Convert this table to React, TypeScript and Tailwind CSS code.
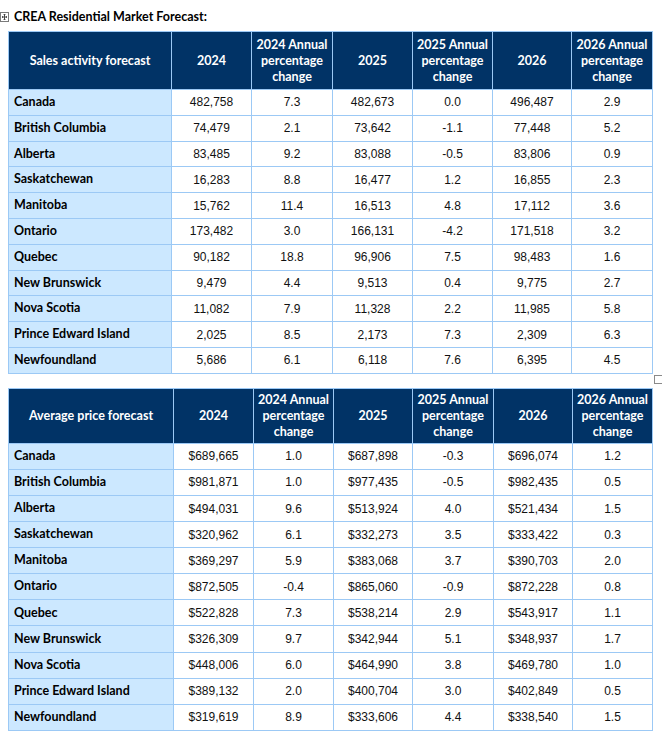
import React from "react";

type Row = [string, string, string, string, string, string, string];

const SALES: Row[] = [
  ["Canada", "482,758", "7.3", "482,673", "0.0", "496,487", "2.9"],
  ["British Columbia", "74,479", "2.1", "73,642", "-1.1", "77,448", "5.2"],
  ["Alberta", "83,485", "9.2", "83,088", "-0.5", "83,806", "0.9"],
  ["Saskatchewan", "16,283", "8.8", "16,477", "1.2", "16,855", "2.3"],
  ["Manitoba", "15,762", "11.4", "16,513", "4.8", "17,112", "3.6"],
  ["Ontario", "173,482", "3.0", "166,131", "-4.2", "171,518", "3.2"],
  ["Quebec", "90,182", "18.8", "96,906", "7.5", "98,483", "1.6"],
  ["New Brunswick", "9,479", "4.4", "9,513", "0.4", "9,775", "2.7"],
  ["Nova Scotia", "11,082", "7.9", "11,328", "2.2", "11,985", "5.8"],
  ["Prince Edward Island", "2,025", "8.5", "2,173", "7.3", "2,309", "6.3"],
  ["Newfoundland", "5,686", "6.1", "6,118", "7.6", "6,395", "4.5"],
];

const PRICES: Row[] = [
  ["Canada", "$689,665", "1.0", "$687,898", "-0.3", "$696,074", "1.2"],
  ["British Columbia", "$981,871", "1.0", "$977,435", "-0.5", "$982,435", "0.5"],
  ["Alberta", "$494,031", "9.6", "$513,924", "4.0", "$521,434", "1.5"],
  ["Saskatchewan", "$320,962", "6.1", "$332,273", "3.5", "$333,422", "0.3"],
  ["Manitoba", "$369,297", "5.9", "$383,068", "3.7", "$390,703", "2.0"],
  ["Ontario", "$872,505", "-0.4", "$865,060", "-0.9", "$872,228", "0.8"],
  ["Quebec", "$522,828", "7.3", "$538,214", "2.9", "$543,917", "1.1"],
  ["New Brunswick", "$326,309", "9.7", "$342,944", "5.1", "$348,937", "1.7"],
  ["Nova Scotia", "$448,006", "6.0", "$464,990", "3.8", "$469,780", "1.0"],
  ["Prince Edward Island", "$389,132", "2.0", "$400,704", "3.0", "$402,849", "0.5"],
  ["Newfoundland", "$319,619", "8.9", "$333,606", "4.4", "$338,540", "1.5"],
];

const calibri = "font-['Lato','Liberation_Sans',sans-serif]";
const arial = "font-['Liberation_Sans',Arial,sans-serif]";

function ForecastTable({
  title,
  rows,
  widths,
  headH,
  rowH,
}: {
  title: string;
  rows: Row[];
  widths: number[];
  headH: string;
  rowH: string;
}) {
  const heads = [
    title,
    "2024",
    "2024 Annual percentage change",
    "2025",
    "2025 Annual percentage change",
    "2026",
    "2026 Annual percentage change",
  ];
  return (
    <table className="w-[644px] table-fixed border-collapse border border-[#9cc9f5]">
      <colgroup>
        {widths.map((w, i) => (
          <col key={i} style={{ width: w }} />
        ))}
      </colgroup>
      <thead>
        <tr className={headH}>
          {heads.map((h) => (
            <th
              key={h}
              className={`${calibri} border border-[#9cc9f5] bg-[#013366] px-1 text-center text-[12.5px] font-bold leading-4 text-white`}
            >
              {h}
            </th>
          ))}
        </tr>
      </thead>
      <tbody>
        {rows.map((r) => (
          <tr key={r[0]} className={rowH}>
            <td
              className={`${calibri} border border-[#9cc9f5] bg-[#cce8ff] pl-[5px] text-[12.5px] font-bold text-black`}
            >
              {r[0]}
            </td>
            {r.slice(1).map((v, i) => (
              <td
                key={i}
                className={`${arial} border border-[#9cc9f5] bg-white text-center text-[12px] text-[#111]`}
              >
                {v}
              </td>
            ))}
          </tr>
        ))}
      </tbody>
    </table>
  );
}

export default function App() {
  return (
    <div className="relative min-h-[743px] w-[662px] bg-white">
      {/* table move handle */}
      <svg
        className="absolute left-0 top-[12px]"
        width="9"
        height="10"
        viewBox="0 0 9 10"
      >
        <rect x="0.5" y="0.5" width="8" height="9" fill="white" stroke="#7a7a7a" />
        <path d="M4.5 2 V8 M2 5 H7" stroke="#444" strokeWidth="1" />
        <path d="M3.5 3 L4.5 2 L5.5 3 M3.5 7 L4.5 8 L5.5 7 M3 4 L2 5 L3 6 M6 4 L7 5 L6 6" stroke="#444" fill="none" strokeWidth="0.8" />
      </svg>

      <div className="px-2 pt-[9px]">
        <p className={`${calibri} pl-[6px] text-[12.5px] font-bold leading-4 text-black`}>
          CREA Residential Market Forecast:
        </p>
        <div className="mt-[6px]">
          <ForecastTable
            title="Sales activity forecast"
            rows={SALES}
            widths={[163, 80, 81, 80, 80, 79, 81]}
            headH="h-[58px]"
            rowH="h-[25.8px]"
          />
        </div>
        <div className="relative mt-[14px]">
          {/* table resize handle */}
          <div className="absolute right-[-9px] top-[-13px] h-[9px] w-[9px] border border-[#8a8a8a] bg-white" />
          <ForecastTable
            title="Average price forecast"
            rows={PRICES}
            widths={[165, 80, 80, 79, 81, 79, 80]}
            headH="h-[55px]"
            rowH="h-[26.1px]"
          />
        </div>
      </div>
    </div>
  );
}
